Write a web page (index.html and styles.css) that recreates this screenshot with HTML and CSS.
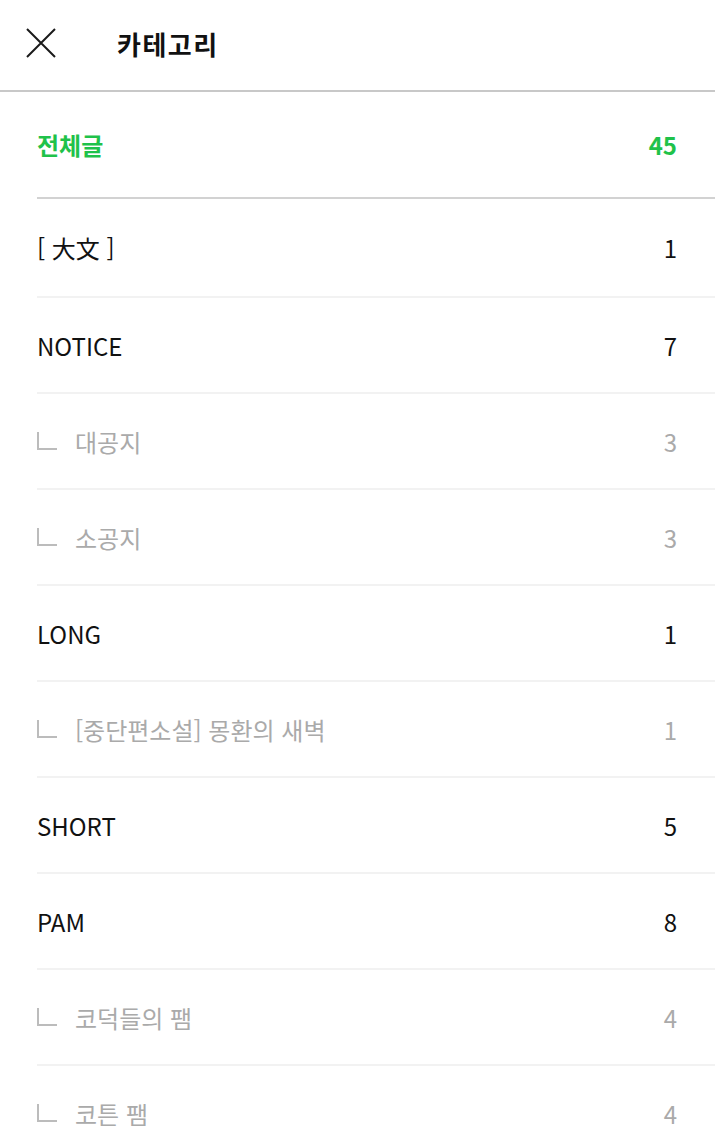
FILE: index.html
```html
<!DOCTYPE html>
<html lang="ko">
<head>
    <meta charset="utf-8">
    <title>카테고리</title>
    <link rel="stylesheet" href="styles.css">
</head>
<body>
    <div class="header">
        <button class="close-button" aria-label="닫기">
            <svg width="30" height="30" viewBox="0 0 30 30">
                <path d="M1 1 L29 29 M29 1 L1 29" stroke="#1a1a1a" stroke-width="2" fill="none"/>
            </svg>
        </button>
        <h1 class="title">카테고리</h1>
    </div>

    <ul class="category-list">
        <li class="category all">
            <span class="name">전체글</span>
            <span class="count">45</span>
        </li>
        <li class="category">
            <span class="name">[ 大文 ]</span>
            <span class="count">1</span>
        </li>
        <li class="category">
            <span class="name">NOTICE</span>
            <span class="count">7</span>
        </li>
        <li class="category sub">
            <span class="name"><i class="branch"></i>대공지</span>
            <span class="count">3</span>
        </li>
        <li class="category sub">
            <span class="name"><i class="branch"></i>소공지</span>
            <span class="count">3</span>
        </li>
        <li class="category">
            <span class="name">LONG</span>
            <span class="count">1</span>
        </li>
        <li class="category sub">
            <span class="name"><i class="branch"></i>[중단편소설] 몽환의 새벽</span>
            <span class="count">1</span>
        </li>
        <li class="category">
            <span class="name">SHORT</span>
            <span class="count">5</span>
        </li>
        <li class="category">
            <span class="name">PAM</span>
            <span class="count">8</span>
        </li>
        <li class="category sub">
            <span class="name"><i class="branch"></i>코덕들의 팸</span>
            <span class="count">4</span>
        </li>
        <li class="category sub">
            <span class="name"><i class="branch"></i>코튼 팸</span>
            <span class="count">4</span>
        </li>
    </ul>
</body>
</html>
```

FILE: styles.css
```css
body {
    margin: 0;
    background-color: #fff;
    font-family: "Noto Sans CJK KR", "Noto Sans", sans-serif;
    color: #111;
}
.header {
    display: flex;
    align-items: center;
    height: 86px;
    padding: 0 0 4px 26px;
    border-bottom: 2px solid #c8c8c8;
}
.close-button {
    display: flex;
    padding: 0;
    border: none;
    background: none;
}
.title {
    margin: 0 0 0 61px;
    font-size: 26px;
    font-weight: bold;
    letter-spacing: 1.5px;
    color: #111;
}
.category-list {
    list-style: none;
    margin: 0 0 0 37px;
    padding: 0;
}
.category {
    display: flex;
    justify-content: space-between;
    align-items: center;
    height: 94px;
    padding-right: 38px;
    border-bottom: 2px solid #f2f2f2;
    font-size: 24px;
}
.category.all {
    height: 105px;
    border-bottom-color: #d2d2d2;
    color: #1fc24a;
    font-weight: bold;
}
/* первая строка после "전체글" чуть выше остальных */
.category.all + .category {
    height: 97px;
}
.category.sub {
    color: #aaa;
}
.name {
    display: flex;
    align-items: center;
}
.branch {
    display: inline-block;
    width: 18px;
    height: 16px;
    margin-right: 18px;
    border-left: 2px solid #bcbcbc;
    border-bottom: 2px solid #bcbcbc;
}
```
